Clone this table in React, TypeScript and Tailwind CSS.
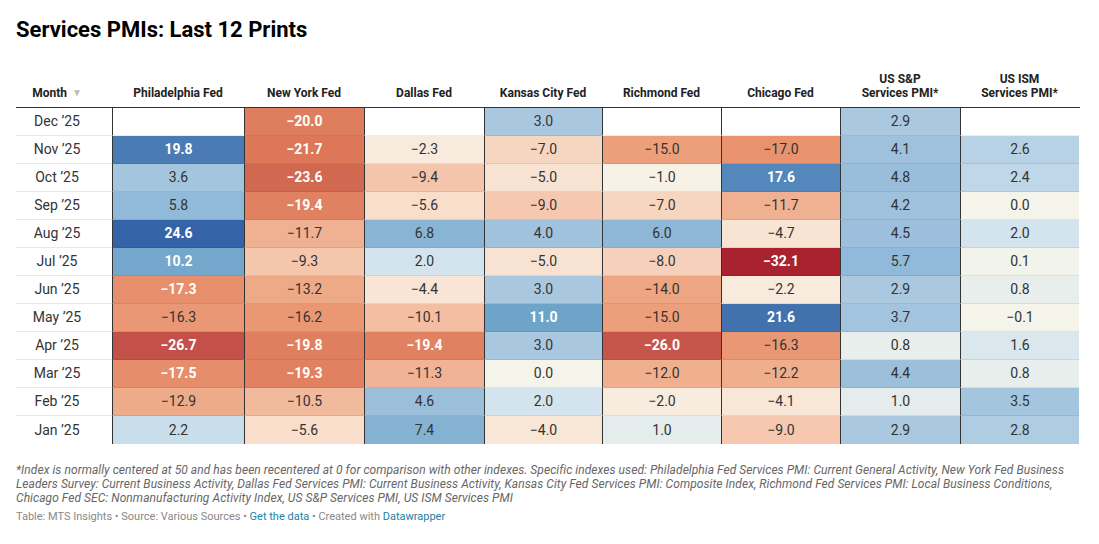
const months = ["Dec ’25", "Nov ’25", "Oct ’25", "Sep ’25", "Aug ’25", "Jul ’25", "Jun ’25", "May ’25", "Apr ’25", "Mar ’25", "Feb ’25", "Jan ’25"];

const rows: (number | null)[][] = [
    [null, -20.0, null, 3.0, null, null, 2.9, null],
    [19.8, -21.7, -2.3, -7.0, -15.0, -17.0, 4.1, 2.6],
    [3.6, -23.6, -9.4, -5.0, -1.0, 17.6, 4.8, 2.4],
    [5.8, -19.4, -5.6, -9.0, -7.0, -11.7, 4.2, 0.0],
    [24.6, -11.7, 6.8, 4.0, 6.0, -4.7, 4.5, 2.0],
    [10.2, -9.3, 2.0, -5.0, -8.0, -32.1, 5.7, 0.1],
    [-17.3, -13.2, -4.4, 3.0, -14.0, -2.2, 2.9, 0.8],
    [-16.3, -16.2, -10.1, 11.0, -15.0, 21.6, 3.7, -0.1],
    [-26.7, -19.8, -19.4, 3.0, -26.0, -16.3, 0.8, 1.6],
    [-17.5, -19.3, -11.3, 0.0, -12.0, -12.2, 4.4, 0.8],
    [-12.9, -10.5, 4.6, 2.0, -2.0, -4.1, 1.0, 3.5],
    [2.2, -5.6, 7.4, -4.0, 1.0, -9.0, 2.9, 2.8],
];

// value -> colour stops, read off the chart
const stops: [number, string][] = [
    [-32.1, "#a8222f"],
    [-26.5, "#c4524a"],
    [-23.6, "#d06950"],
    [-21.7, "#dc7758"],
    [-19.5, "#e08060"],
    [-17.3, "#e78f6c"],
    [-16, "#ea9a76"],
    [-14.5, "#eca27e"],
    [-12.5, "#efad8c"],
    [-11, "#f1b597"],
    [-9.5, "#f4c4aa"],
    [-8, "#f6d0ba"],
    [-6, "#f8dcc8"],
    [-4.5, "#f8e5d5"],
    [-2, "#f8ecdf"],
    [-1, "#f7f1e6"],
    [0, "#f4f4ea"],
    [1, "#e4ecec"],
    [2, "#d3e4ee"],
    [2.4, "#bfd7e8"],
    [2.9, "#aac9e0"],
    [4.3, "#9dc0dc"],
    [6, "#8fb8d8"],
    [7.4, "#85b2d3"],
    [11, "#6fa4c9"],
    [17.6, "#5487bb"],
    [21.6, "#4272ae"],
    [24.6, "#3463a8"],
];

const toRgb = (h: string) => [1, 3, 5].map((i) => parseInt(h.slice(i, i + 2), 16));

const colorFor = (v: number) => {
    if (v <= stops[0][0]) return stops[0][1];
    for (let i = 1; i < stops.length; i++) {
        const [b, cb] = stops[i];
        if (v <= b) {
            const [a, ca] = stops[i - 1];
            const t = (v - a) / (b - a);
            const x = toRgb(ca);
            const y = toRgb(cb);
            const m = x.map((c, k) => Math.round(c + (y[k] - c) * t));
            return `rgb(${m[0]},${m[1]},${m[2]})`;
        }
    }
    return stops[stops.length - 1][1];
};

const fmt = (v: number) => (v < 0 ? "−" + Math.abs(v).toFixed(1) : v.toFixed(1));

const headers: string[][] = [
    ["Philadelphia Fed"],
    ["New York Fed"],
    ["Dallas Fed"],
    ["Kansas City Fed"],
    ["Richmond Fed"],
    ["Chicago Fed"],
    ["US S&P", "Services PMI*"],
    ["US ISM", "Services PMI*"],
];

const grid = "grid grid-cols-[96px_132px_120px_120px_118px_119px_119px_120px_119px]";

export default function App() {
    return (
        <div className="w-[1099px] h-[544px] bg-white px-4 pt-[17px] font-['Roboto',sans-serif] text-[#333]">
            <h1 className="text-[22px] leading-[26px] font-bold text-black">Services PMIs: Last 12 Prints</h1>

            <div className="mt-[17px] w-[1064px]">
                <div className={`${grid} h-[48px] border-b border-[#333]`}>
                    <div className="flex items-end justify-center pr-[14px] pb-[7px] text-[12px] leading-[14px] font-bold text-[#222]">
                        Month <span className="ml-[5px] text-[10px] text-[#bbb]">▼</span>
                    </div>
                    {headers.map((h) => (
                        <div
                            key={h.join()}
                            className="flex flex-col items-center justify-end pb-[7px] text-center text-[12px] leading-[14px] font-bold text-[#222]"
                        >
                            {h.map((line) => (
                                <span key={line}>{line}</span>
                            ))}
                        </div>
                    ))}
                </div>

                {rows.map((row, r) => {
                    const last = r === rows.length - 1;
                    return (
                        <div key={months[r]} className={grid}>
                            <div
                                className={`flex h-[28px] items-center justify-center pr-[14px] text-[14px] text-[#333] ${
                                    last ? "" : "border-b border-[#e8e8e8]"
                                }`}
                            >
                                {months[r]}
                            </div>
                            {row.map((v, c) => {
                                const strong = v !== null && (v >= 10 || v <= -17.1);
                                return (
                                    <div
                                        key={c}
                                        className={`flex h-[28px] items-center justify-center border-l border-l-[#333] text-[14px] ${
                                            last ? "" : "border-b border-b-black/[0.07]"
                                        } ${strong ? "font-bold text-white" : "text-[#333]"}`}
                                        style={{ backgroundColor: v === null ? "#ffffff" : colorFor(v) }}
                                    >
                                        {v === null ? "" : fmt(v)}
                                    </div>
                                );
                            })}
                        </div>
                    );
                })}
            </div>

            <div className="mt-[19px] text-[12px] leading-[14px] italic tracking-[0.06px] text-[#666] whitespace-nowrap">
                <div>
                    *Index is normally centered at 50 and has been recentered at 0 for comparison with other indexes. Specific indexes used: Philadelphia Fed Services PMI: Current General Activity, New York Fed Business
                </div>
                <div>
                    Leaders Survey: Current Business Activity, Dallas Fed Services PMI: Current Business Activity, Kansas City Fed Services PMI: Composite Index, Richmond Fed Services PMI: Local Business Conditions,
                </div>
                <div>Chicago Fed SEC: Nonmanufacturing Activity Index, US S&P Services PMI, US ISM Services PMI</div>
            </div>
            <div className="mt-[5px] text-[11px] leading-[14px] text-[#888]">
                Table: MTS Insights • Source: Various Sources • <span className="text-[#1d81a2]">Get the data</span> • Created with{" "}
                <span className="text-[#1d81a2]">Datawrapper</span>
            </div>
        </div>
    );
}
